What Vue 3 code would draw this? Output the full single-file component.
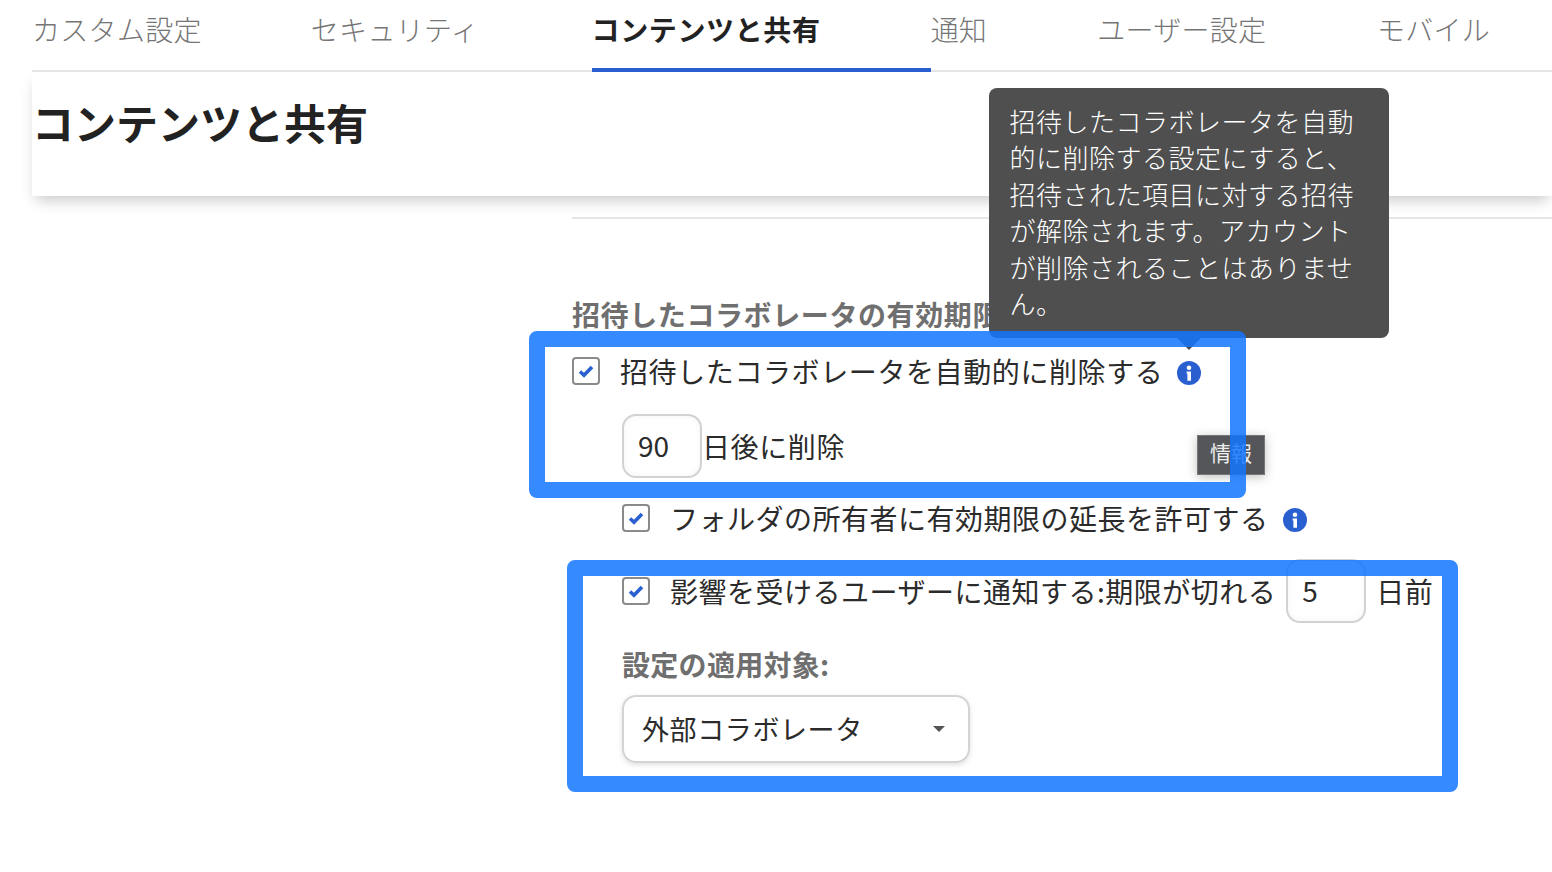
<template>
  <div class="page">
    <!-- タブ -->
    <nav class="tabs">
      <a v-for="t in tabs" :key="t" class="tab" :class="{ active: t === current }">{{ t }}</a>
    </nav>

    <header class="head">
      <h1>コンテンツと共有</h1>
    </header>

    <section class="settings">
      <h2 class="section-title">招待したコラボレータの有効期限</h2>

      <div class="row first">
        <span class="check">
          <svg viewBox="0 0 16 16" width="16" height="16"><path d="M2 8.5 6 12.2 14 4" /></svg>
        </span>
        <span class="label">招待したコラボレータを自動的に削除する</span>
        <svg class="info" viewBox="0 0 24 24" width="24" height="24">
          <circle cx="12" cy="12" r="12" fill="#2a5fcf" />
          <circle cx="12" cy="6.8" r="2.3" fill="#fff" />
          <path d="M9.6 10.4h4.4v9.4h-3.6v-7.4h-.8z" fill="#fff" />
        </svg>
      </div>

      <div class="days indent">
        <span class="num-input">90</span>
        <span class="after">日後に削除</span>
      </div>

      <div class="row indent third">
        <span class="check">
          <svg viewBox="0 0 16 16" width="16" height="16"><path d="M2 8.5 6 12.2 14 4" /></svg>
        </span>
        <span class="label">フォルダの所有者に有効期限の延長を許可する</span>
        <svg class="info" viewBox="0 0 24 24" width="24" height="24">
          <circle cx="12" cy="12" r="12" fill="#2a5fcf" />
          <circle cx="12" cy="6.8" r="2.3" fill="#fff" />
          <path d="M9.6 10.4h4.4v9.4h-3.6v-7.4h-.8z" fill="#fff" />
        </svg>
      </div>

      <div class="row indent fourth">
        <span class="check">
          <svg viewBox="0 0 16 16" width="16" height="16"><path d="M2 8.5 6 12.2 14 4" /></svg>
        </span>
        <span class="label">影響を受けるユーザーに通知する:期限が切れる</span>
        <span class="num-input small">5</span>
        <span class="label">日前</span>
      </div>

      <div class="apply indent">設定の適用対象:</div>
      <div class="select indent">
        <span>外部コラボレータ</span>
        <i class="caret"></i>
      </div>
    </section>

    <!-- ツールチップ -->
    <div class="tooltip">招待したコラボレータを自動的に削除する設定にすると、招待された項目に対する招待が解除されます。アカウントが削除されることはありません。</div>
    <div class="mini-tip">情報</div>

    <!-- 注釈の枠 -->
    <div class="mark mark-a"></div>
    <div class="mark mark-b"></div>
  </div>
</template>

<script setup>
const tabs = ['カスタム設定', 'セキュリティ', 'コンテンツと共有', '通知', 'ユーザー設定', 'モバイル']
const current = 'コンテンツと共有'
</script>

<style>
html, body { margin: 0; background: #fff; }
</style>

<style scoped>
.page {
  position: relative;
  width: 1552px;
  height: 872px;
  overflow: hidden;
  background: #fff;
  color: #2b2b2b;
  font-family: "Noto Sans CJK JP", "Noto Sans", sans-serif;
}

.tabs {
  display: flex;
  height: 72px;
  margin-left: 32px;
  box-sizing: border-box;
  border-bottom: 2px solid #e6e6e6;
}
.tab {
  height: 72px;
  box-sizing: border-box;
  font-size: 28px;
  line-height: 58px;
  font-weight: 300;
  letter-spacing: 0.3px;
  color: #757575;
}
.tab:nth-child(1) { padding-right: 109px; }
.tab:nth-child(2) { padding-right: 112.6px; }
.tab:nth-child(4) { padding-right: 110.5px; letter-spacing: 0; }
.tab:nth-child(5) { padding-right: 110.5px; }
.tab.active {
  padding-right: 110px;
  color: #222;
  font-weight: 700;
  letter-spacing: 0.64px;
  border-bottom: 4px solid #2a5fcf;
}

.head {
  height: 124px;
  margin-left: 32px;
  padding-top: 26px;
  box-sizing: border-box;
  box-shadow: 0 8px 14px -4px rgba(0, 0, 0, 0.22);
}
.head h1 {
  margin: 0;
  font-size: 42px;
  line-height: 48px;
  font-weight: 700;
  color: #222;
}

.settings {
  margin: 21px 0 0 572px;
  border-top: 2px solid #e6e6e6;
  letter-spacing: 0.6px;
}
.section-title {
  margin: 75px 0 0;
  font-size: 28px;
  line-height: 40px;
  font-weight: 700;
  color: #6f6f6f;
  white-space: nowrap;
}
.indent { margin-left: 50px; }

.row {
  display: flex;
  align-items: center;
  height: 40px;
  font-size: 28px;
  line-height: 38px;
  white-space: nowrap;
}
.row.first { margin-top: 17px; }
.row.third { margin-top: 20px; letter-spacing: 0.5px; }
.row.fourth { margin-top: 21px; height: 64px; letter-spacing: 0.5px; }

.check {
  display: flex;
  align-items: center;
  justify-content: center;
  width: 28px;
  height: 28px;
  box-sizing: border-box;
  margin-right: 20px;
  border: 2px solid #8a8a8a;
  border-radius: 4px;
  background: #fff;
}
.check path {
  fill: none;
  stroke: #2a5fcf;
  stroke-width: 3.6;
}
.info { margin: 3px 0 0 14px; }

.days {
  display: flex;
  align-items: center;
  margin-top: 23px;
  font-size: 28px;
}
.num-input {
  display: block;
  width: 80px;
  height: 64px;
  padding-left: 14px;
  box-sizing: border-box;
  border: 2px solid #d2d2d2;
  border-radius: 14px;
  box-shadow: inset 0 0 6px rgba(0, 0, 0, 0.05);
  font-size: 28px;
  line-height: 58px;
  letter-spacing: 0;
  background: #fff;
}
.num-input.small { margin: 0 10px; }

.apply {
  margin-top: 22px;
  font-size: 28px;
  line-height: 38px;
  font-weight: 700;
  letter-spacing: 0.3px;
  color: #6f6f6f;
}
.select {
  display: flex;
  align-items: center;
  justify-content: space-between;
  width: 348px;
  height: 68px;
  margin-top: 12px;
  padding: 0 23px 0 18px;
  box-sizing: border-box;
  border: 2px solid #d4d4d4;
  border-radius: 14px;
  box-shadow: 0 2px 5px rgba(0, 0, 0, 0.12);
  font-size: 27px;
  line-height: 38px;
}
.caret {
  width: 0;
  height: 0;
  border: 6px solid transparent;
  border-top: 6px solid #555;
  border-bottom: 0;
}

.tooltip {
  position: absolute;
  left: 989px;
  top: 88px;
  width: 400px;
  height: 250px;
  padding: 15px 20px 15px 20.5px;
  box-sizing: border-box;
  border-radius: 8px;
  background: #4f4f4f;
  color: #fff;
  font-size: 26px;
  line-height: 36.4px;
  letter-spacing: 0.5px;
  font-weight: 300;
}
.tooltip::after {
  content: "";
  position: absolute;
  left: 188px;
  bottom: -12px;
  border: 12px solid transparent;
  border-top: 12px solid #4f4f4f;
  border-bottom: 0;
}
.mini-tip {
  position: absolute;
  left: 1197px;
  top: 435px;
  width: 68px;
  height: 40px;
  box-sizing: border-box;
  border: 1px solid #777;
  background: #55565a;
  color: #eee;
  font-size: 21px;
  line-height: 33px;
  text-align: center;
  box-shadow: 0 2px 10px rgba(0, 0, 0, 0.25);
}

.mark {
  position: absolute;
  box-sizing: border-box;
  border: 16px solid rgba(19, 118, 255, 0.85);
  border-radius: 8px;
}
.mark-a {
  left: 529px;
  top: 331px;
  width: 717px;
  height: 167px;
}
.mark-b {
  left: 567px;
  top: 560px;
  width: 891px;
  height: 232px;
}
</style>
